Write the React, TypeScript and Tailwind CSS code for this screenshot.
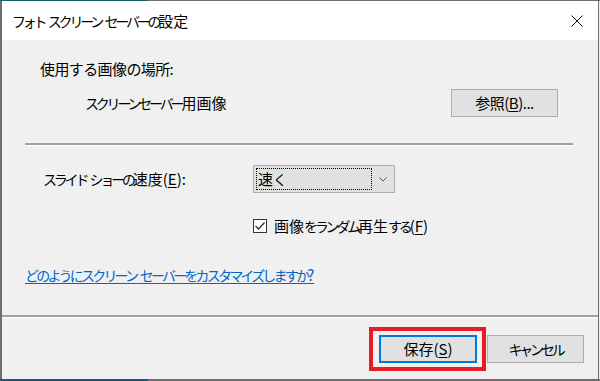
const Mn = ({ children }: { children: string }) => (
  <span className="underline underline-offset-2">{children}</span>
);

// kana runs are set tighter, like the proportional kana of the Windows UI font
const K = ({ children }: { children: string }) => (
  <span className="text-[14px] tracking-[-3.2px]">{children}</span>
);

const Separator = ({ className = "" }: { className?: string }) => (
  <div className={`h-[3px] border-t-2 border-[#a0a0a0] bg-white ${className}`} />
);

export default function App() {
  return (
    <div className="w-[600px] h-[381px] flex flex-col bg-[#f0f0f0] text-black text-[15px] leading-[20px] font-['Noto_Sans_CJK_JP','Noto_Sans',sans-serif]">
      {/* desktop edge */}
      <div className="h-px flex shrink-0">
        <div className="w-[148px] bg-[#1b5a73]" />
        <div className="flex-1 bg-[#6e6e6e]" />
      </div>

      <div className="w-[599px] flex-1 flex flex-col border-l-2 border-r border-[#6e6e6e] bg-[#f0f0f0]">
        {/* title bar */}
        <div className="h-[39px] shrink-0 flex items-center justify-between bg-white pl-[10px] pr-[14px]">
          <span>
            <K>フォト</K> <K>スクリーン</K> <K>セーバーの</K>設定
          </span>
          <svg width="12" height="12" viewBox="0 0 12 12" className="mr-[1px]">
            <path d="M0.5 0.5 L11.5 11.5 M11.5 0.5 L0.5 11.5" stroke="#111" strokeWidth="1" />
          </svg>
        </div>

        {/* body */}
        <div className="flex-1 flex flex-col">
          <div className="mt-[19px] pl-[38px] tracking-[-0.6px]">使用する画像の場所:</div>

          <div className="mt-[10px] h-[28px] flex items-center justify-between pl-[83px] pr-[40px]">
            <span>
              <K>スクリーンセーバー</K>用画像
            </span>
            <button className="w-[107px] h-[28px] bg-[#e1e1e1] border border-[#adadad] flex items-center justify-center tracking-[-0.5px]">
              参照(<Mn>B</Mn>)...
            </button>
          </div>

          <Separator className="mt-[26px] ml-[23px] w-[548px]" />

          <div className="mt-[19px] h-[28px] flex items-center pl-[41px]">
            <span className="w-[210px]">
              <K>スライド</K> <K>ショーの</K>速度(<Mn>E</Mn>):
            </span>
            <div className="w-[142px] h-[28px] bg-[#e1e1e1] border border-[#adadad] flex items-center pl-[2px] pr-[7px]">
              <div className="w-[116px] h-[22px] border border-dotted border-black flex items-center pl-[1px]">
                速<K>く</K>
              </div>
              <svg width="8" height="5" viewBox="0 0 8 5" className="ml-auto">
                <path d="M0.5 0.5 L4 4 L7.5 0.5" fill="none" stroke="#555" strokeWidth="1" />
              </svg>
            </div>
          </div>

          <div className="mt-[23px] h-[20px] flex items-center pl-[251px] gap-[7px]">
            <div className="w-[14px] h-[14px] bg-white border border-[#333] flex items-center justify-center">
              <svg width="10" height="8" viewBox="0 0 10 8">
                <path d="M0.5 4 L3.5 7 L9.5 0.5" fill="none" stroke="#333" strokeWidth="1.3" />
              </svg>
            </div>
            <span>
              画像<K>をランダム</K>再生<K>する</K>(<Mn>F</Mn>)
            </span>
          </div>

          <div className="mt-[29px] pl-[23px]">
            <span className="text-[#0066cc] underline underline-offset-2">
              <span className="text-[14px] tracking-[-2.8px]">どのようにスクリーン</span>{" "}
              <span className="text-[14px] tracking-[-2.8px]">セーバーをカスタマイズしますか</span>?
            </span>
          </div>
        </div>

        {/* footer */}
        <Separator className="shrink-0" />
        <div className="h-[61px] shrink-0 flex items-center justify-end pr-[14px] gap-[1px]">
          <div className="border-4 border-[#e81c24] pl-[6px] pr-[5px] pt-[4px] pb-[4px]">
            <button className="w-[98px] h-[28px] bg-[#e1e1e1] border-2 border-[#0078d7] flex items-center justify-center">
              保存(<Mn>S</Mn>)
            </button>
          </div>
          <button className="w-[97px] h-[28px] bg-[#e1e1e1] border border-[#adadad] flex items-center justify-center">
            <K>キャンセル</K>
          </button>
        </div>
      </div>

      <div className="h-[2px] flex shrink-0">
        <div className="w-[148px] bg-[#1b5a73]" />
        <div className="flex-1 bg-[#6e6e6e]" />
      </div>
    </div>
  );
}
